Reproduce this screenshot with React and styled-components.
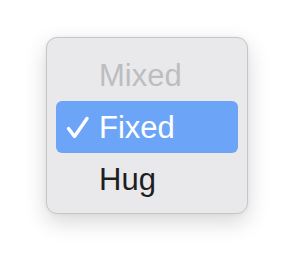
import React from 'react';
import styled, { createGlobalStyle } from 'styled-components';

const Global = createGlobalStyle`
  html, body {
    margin: 0;
    padding: 0;
    background: #ffffff;
  }
  body {
    font-family: "Liberation Sans", Arial, sans-serif;
  }
`;

const Page = styled.div`
  width: 294px;
  height: 268px;
  padding: 37px 0 0 46px;
  box-sizing: border-box;
`;

const Menu = styled.div`
  width: 202px;
  height: 177px;
  box-sizing: border-box;
  padding: 11px 9px 0 9px;
  background: #e9e9eb;
  border: 1px solid #c6c6c8;
  border-radius: 11px;
  box-shadow: 0 8px 22px rgba(0, 0, 0, 0.16), 0 0 4px rgba(0, 0, 0, 0.05);
  display: flex;
  flex-direction: column;
`;

const Item = styled.div`
  height: 52px;
  border-radius: 6px;
  display: flex;
  align-items: center;
  padding-left: 10px;
  font-size: 31px;
  line-height: 52px;
  color: ${(p) => (p.disabled ? '#bdbdbf' : p.selected ? '#ffffff' : '#1e1e1e')};
  background: ${(p) => (p.selected ? '#6ca5f8' : 'transparent')};
`;

const CheckSlot = styled.span`
  width: 33px;
  height: 52px;
  display: flex;
  align-items: center;
  flex-shrink: 0;
`;

const Label = styled.span`
  position: relative;
  top: 1px;
`;

const Check = () => (
  <svg width="24" height="24" viewBox="0 0 24 24" style={{ marginTop: 2 }}>
    <path
      d="M2.5 12.5 L8.5 20.5 L21 2.5"
      fill="none"
      stroke="#ffffff"
      strokeWidth="3.4"
      strokeLinecap="round"
      strokeLinejoin="round"
    />
  </svg>
);

const App = () => {
  return (
    <Page>
      <Global />
      <Menu>
        <Item disabled>
          <CheckSlot />
          <Label>Mixed</Label>
        </Item>
        <Item selected>
          <CheckSlot>
            <Check />
          </CheckSlot>
          <Label>Fixed</Label>
        </Item>
        <Item>
          <CheckSlot />
          <Label>Hug</Label>
        </Item>
      </Menu>
    </Page>
  );
};

export default App;
